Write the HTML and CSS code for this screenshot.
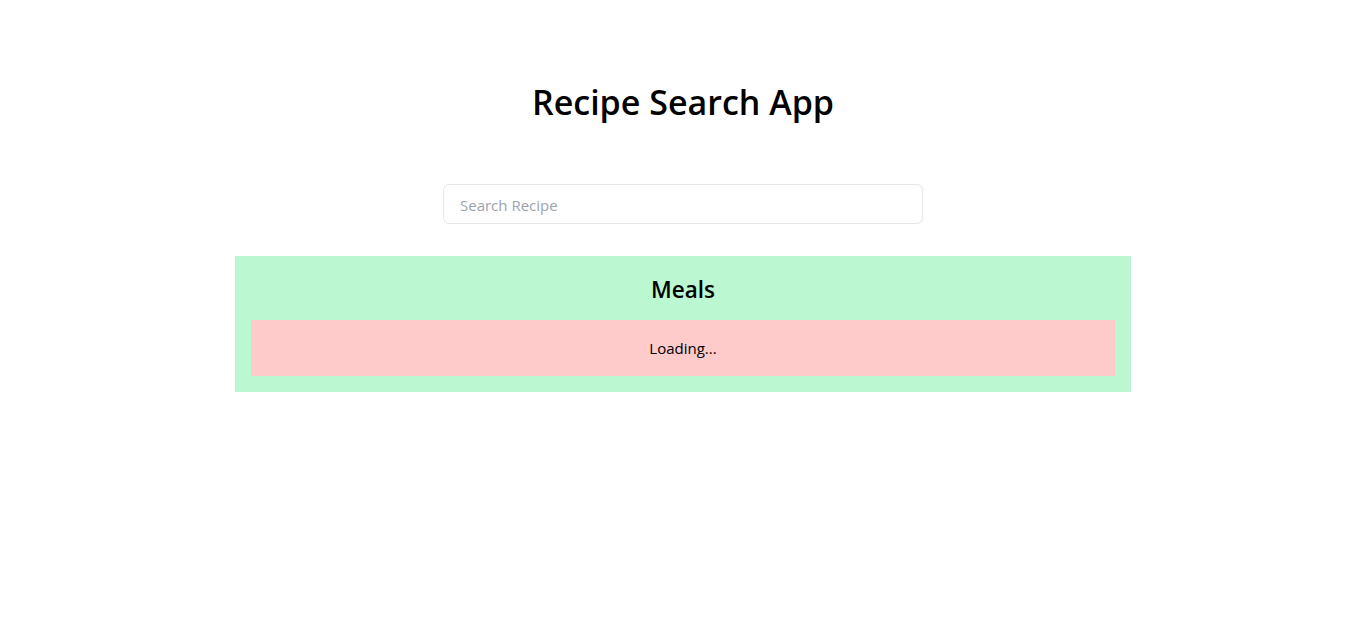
FILE: index.html
```html
<!DOCTYPE html>
<html lang="en">
<head>
<meta charset="utf-8">
<title>Recipe Search App</title>
<link rel="stylesheet" href="styles.css">
</head>
<body>
<main class="app">
  <h1 class="title">Recipe Search App</h1>
  <div class="search-wrap">
    <input class="search" type="text" placeholder="Search Recipe">
  </div>
  <section class="meals">
    <h2 class="meals-title">Meals</h2>
    <div class="loading">Loading...</div>
  </section>
</main>
</body>
</html>
```
FILE: styles.css
```css
* { box-sizing: border-box; }
html, body { margin: 0; padding: 0; background: #ffffff; }
body {
  font-family: "Open Sans", "Noto Sans", sans-serif;
  color: #000;
}
.app {
  display: flex;
  flex-direction: column;
  align-items: center;
  padding-top: 82px;
}
.title {
  margin: 0;
  font-size: 34px;
  line-height: 40px;
  font-weight: 600;
}
.search-wrap {
  margin-top: 62px;
  width: 480px;
}
.search {
  display: block;
  width: 100%;
  height: 40px;
  padding: 1px 16px 0;
  border: 1px solid #e5e7eb;
  border-radius: 6px;
  font-family: inherit;
  font-size: 15px;
  outline: none;
}
.search::placeholder { color: #9ca3af; }
.meals {
  margin-top: 32px;
  width: 896px;
  background: #bbf7d0;
  padding: 16px;
}
.meals-title {
  margin: 0 0 16px;
  padding-top: 2px;
  height: 32px;
  font-size: 22.5px;
  line-height: 32px;
  font-weight: 600;
  text-align: center;
}
.loading {
  background: #fecaca;
  padding: 16px;
  font-size: 15px;
  line-height: 24px;
  text-align: center;
}
```
